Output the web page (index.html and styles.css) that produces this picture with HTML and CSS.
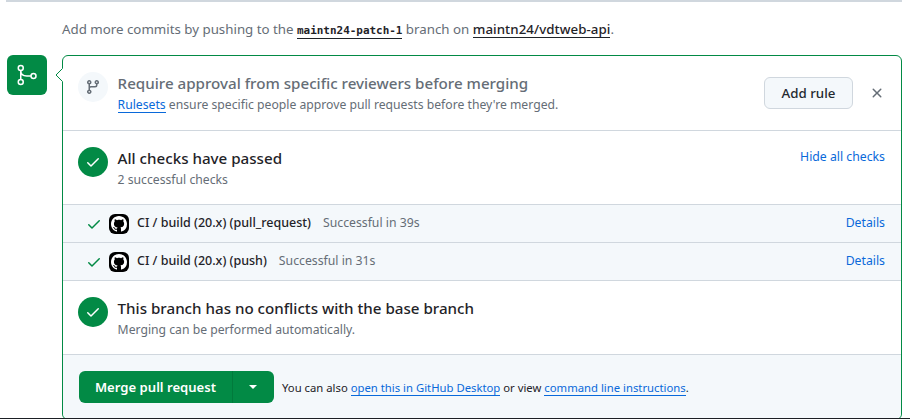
FILE: index.html
```
<!DOCTYPE html>
<html lang="en">
<head>
<meta charset="utf-8">
<title>Pull request merge status</title>
<link rel="stylesheet" href="styles.css">
</head>
<body>
<svg class="defs" aria-hidden="true">
  <symbol id="check" viewBox="0 0 16 16"><path d="M13.78 4.22a.75.75 0 0 1 0 1.06l-7.25 7.25a.75.75 0 0 1-1.06 0L2.22 9.28a.751.751 0 0 1 .018-1.042.751.751 0 0 1 1.042-.018L6 10.94l6.72-6.72a.75.75 0 0 1 1.06 0Z"/></symbol>
  <symbol id="mark" viewBox="0 0 16 16"><path d="M8 0C3.58 0 0 3.58 0 8c0 3.54 2.29 6.53 5.47 7.59.4.07.55-.17.55-.38 0-.19-.01-.82-.01-1.49-2.01.37-2.53-.49-2.69-.94-.09-.23-.48-.94-.82-1.13-.28-.15-.68-.52-.01-.53.63-.01 1.08.58 1.23.82.72 1.21 1.87.87 2.33.66.07-.52.28-.87.51-1.07-1.78-.2-3.64-.89-3.64-3.95 0-.87.31-1.59.82-2.15-.08-.2-.36-1.02.08-2.12 0 0 .67-.21 2.2.82.64-.18 1.32-.27 2-.27s1.36.09 2 .27c1.53-1.04 2.2-.82 2.2-.82.44 1.1.16 1.92.08 2.12.51.56.82 1.27.82 2.15 0 3.07-1.87 3.75-3.65 3.95.29.25.54.73.54 1.48 0 1.07-.01 1.93-.01 2.2 0 .21.15.46.55.38A8.01 8.01 0 0 0 16 8c0-4.42-3.58-8-8-8Z"/></symbol>
</svg>
<main class="page">
  <p class="push-hint"><span>Add more commits by pushing to the</span> <a class="branch">maintn24-patch-1</a> <span>branch on</span> <a class="repo">maintn24/vdtweb-api</a>.</p>
  <div class="merge">
    <div class="badge"><svg width="24" height="24" viewBox="0 0 24 24" fill="none" stroke="currentColor" stroke-width="1.5"><circle cx="5.75" cy="5" r="2.5"/><circle cx="5.75" cy="19" r="2.5"/><circle cx="18.5" cy="13" r="2.5"/><path d="M5.75 7.5v9M5.75 7.5c0 3.5 2.5 5.5 6 5.5H16"/></svg></div>
    <section class="box">
      <svg class="pointer" width="9" height="18" viewBox="0 0 9 18"><path class="pointer-fill" d="M8.5 1L1 9l7.5 8z"/><path class="pointer-fill" d="M7 2h2v14H7z"/><path class="pointer-line" d="M7.5 0V2.5L1 9l6.5 6.5V18"/></svg>
      <div class="row row-first">
        <span class="dot dot-muted"><svg width="16" height="16" viewBox="0 0 16 16"><path d="M9.5 3.25a2.25 2.25 0 1 1 3 2.122V6A2.5 2.5 0 0 1 10 8.5H6a1 1 0 0 0-1 1v1.128a2.251 2.251 0 1 1-1.5 0V5.372a2.25 2.25 0 1 1 1.5 0v1.836A2.493 2.493 0 0 1 6 7h4a1 1 0 0 0 1-1v-.628A2.25 2.25 0 0 1 9.5 3.25Zm-6 0a.75.75 0 1 0 1.5 0 .75.75 0 0 0-1.5 0Zm8.25-.75a.75.75 0 1 0 0 1.5.75.75 0 0 0 0-1.5ZM4.25 12a.75.75 0 1 0 0 1.5.75.75 0 0 0 0-1.5Z"/></svg></span>
        <div class="copy">
          <h3 class="title muted">Require approval from specific reviewers before merging</h3>
          <p class="sub"><a class="link">Rulesets</a> ensure specific people approve pull requests before they're merged.</p>
        </div>
        <div class="tools">
          <button class="btn">Add rule</button>
          <svg class="close" width="16" height="16" viewBox="0 0 16 16"><path d="M3.72 3.72a.75.75 0 0 1 1.06 0L8 6.94l3.22-3.22a.749.749 0 0 1 1.275.326.749.749 0 0 1-.215.734L9.06 8l3.22 3.22a.749.749 0 0 1-.326 1.275.749.749 0 0 1-.734-.215L8 9.06l-3.22 3.22a.751.751 0 0 1-1.042-.018.751.751 0 0 1-.018-1.042L6.94 8 3.72 4.78a.75.75 0 0 1 0-1.06Z"/></svg>
        </div>
      </div>
      <div class="row">
        <span class="dot"><svg width="16" height="16"><use href="#check"/></svg></span>
        <div class="copy">
          <h3 class="title">All checks have passed</h3>
          <p class="sub">2 successful checks</p>
        </div>
        <a class="plain toggle">Hide all checks</a>
      </div>
      <div class="check">
        <svg class="tick" width="16" height="16"><use href="#check"/></svg>
        <span class="avatar"><svg width="16" height="16"><use href="#mark"/></svg></span>
        <div class="check-text"><strong>CI / build (20.x) (pull_request)</strong>
        <span class="time">Successful in 39s</span>
        <a class="plain">Details</a></div>
      </div>
      <div class="check">
        <svg class="tick" width="16" height="16"><use href="#check"/></svg>
        <span class="avatar"><svg width="16" height="16"><use href="#mark"/></svg></span>
        <div class="check-text"><strong>CI / build (20.x) (push)</strong>
        <span class="time">Successful in 31s</span>
        <a class="plain">Details</a></div>
      </div>
      <div class="row">
        <span class="dot"><svg width="16" height="16"><use href="#check"/></svg></span>
        <div class="copy">
          <h3 class="title">This branch has no conflicts with the base branch</h3>
          <p class="sub">Merging can be performed automatically.</p>
        </div>
      </div>
      <div class="actions">
        <div class="split"><button class="merge-btn">Merge pull request</button><button class="caret-btn" aria-label="Select merge method"><i class="caret"></i></button></div>
        <p class="also">You can also <a class="link">open this in GitHub Desktop</a> or view <a class="link">command line instructions</a>.</p>
      </div>
    </section>
  </div>
</main>
</body>
</html>
```
FILE: styles.css
```
* { box-sizing: border-box; }
body { margin: 0; background: #fff; color: #1f2328; font: 13.3px/20px "Noto Sans", "Open Sans", sans-serif; }
h3, p { margin: 0; }
button { font-family: inherit; margin: 0; padding: 0; }
svg { fill: currentColor; flex: none; display: block; }
.defs { position: absolute; width: 0; height: 0; }
.page { height: 419px; overflow: hidden; border-bottom: 1px solid #1b1f24; }
.page::before { content: ""; display: block; height: 2px; margin: 0 8px 0 6px; background: #d0d7de; }
.push-hint { margin: 17px 0 0 62px; height: 36px; color: #656d76; white-space: nowrap; }
.branch, .repo { display: inline-block; line-height: 16px; color: #1f2328; border-bottom: 1px solid #1f2328; }
.branch { font: bold 10.95px/15px "DejaVu Sans Mono", monospace; }
.repo { font-weight: 500; letter-spacing: .06px; }
.merge { display: flex; align-items: flex-start; padding-left: 7px; gap: 15px; }
.badge { width: 40px; height: 40px; border-radius: 6px; background: #028a45; color: #fff; display: grid; place-items: center; }
.badge svg { fill: none; }
.box { position: relative; width: 840px; border: 1px solid #028a45; border-radius: 6px; }
.pointer { position: absolute; left: -8px; top: 10px; }
.pointer-fill { fill: #fff; }
.pointer-line { fill: none; stroke: #028a45; }
.row { display: flex; height: 74px; padding: 16px 16px 0 15px; border-bottom: 1px solid #d0d7de; }
.row-first { height: 75px; }
.dot { width: 30px; height: 30px; border-radius: 50%; background: #028a45; color: #fff; display: grid; place-items: center; flex: none; }
.dot-muted { background: #f4f8fb; color: #656d76; }
.copy { margin-left: 9.6px; flex: 1; white-space: nowrap; }
.title { font-size: 15.15px; line-height: 22px; font-weight: 500; }
.muted { color: #656d76; }
.sub { font-size: 12.2px; line-height: 22px; color: #656d76; }
.link { color: #0969da; border-bottom: 1px solid #0969da; display: inline-block; line-height: 15px; }
.plain { font-size: 12.25px; line-height: 18px; color: #0969da; margin-left: auto; }
.toggle { padding-top: 1px; }
.tools { display: flex; align-items: center; height: 32px; margin-top: 5px; gap: 16px; }
.btn { width: 89px; height: 32px; border: 1px solid #d0d7de; border-radius: 6px; background: #f4f8fb; color: #24292f; font-size: 13.3px; font-weight: 500; }
.close { color: #656d76; }
.check { display: flex; align-items: center; height: 38px; padding: 0 16px 0 23px; border-bottom: 1px solid #d0d7de; background: #f4f8fb; font-size: 12.25px; white-space: nowrap; }
.check-text { display: flex; flex: 1; align-items: center; margin-left: 8px; padding-bottom: 2px; }
.check strong { font-size: 12.5px; font-weight: 500; }
.tick { color: #028a45; }
.avatar { width: 20px; height: 20px; margin-left: 7px; border-radius: 6px; background: #000; color: #fff; display: grid; place-items: center; }
.time { color: #656d76; margin-left: 12px; }
.actions { display: flex; align-items: center; height: 64px; padding-left: 16px; background: #f4f8fb; border-radius: 0 0 6px 6px; }
.split { display: flex; width: 195px; height: 32px; border-radius: 6px; background: #028a45; }
.split button { border: 0; background: none; color: #fff; }
.split .merge-btn { width: 153px; font-size: 13.1px; font-weight: 600; }
.split .caret-btn { width: 42px; border-left: 1px solid #017a3c; display: grid; place-items: center; }
.caret { border: 4px solid transparent; border-top-color: #fff; border-bottom: 0; margin-right: 2px; }
.also { margin-left: 8px; padding-top: 2px; font-size: 11.3px; white-space: nowrap; }
```
